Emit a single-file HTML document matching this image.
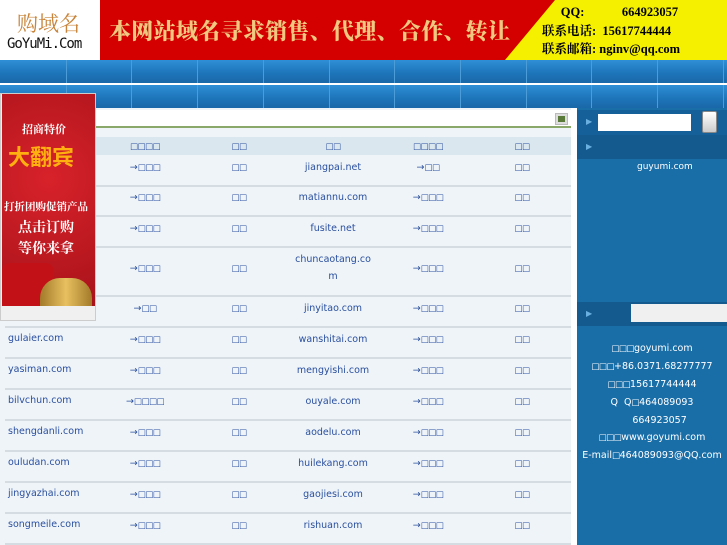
<!DOCTYPE html>
<html><head><meta charset="utf-8"><style>
*{margin:0;padding:0;box-sizing:border-box}
body{width:727px;height:545px;overflow:hidden;position:relative;background:#eef4f7;font-family:"DejaVu Sans","Liberation Sans",sans-serif;font-size:9.5px;color:#2a4fa0}
.a{position:absolute}
.nav{position:absolute;left:0;width:727px;background:linear-gradient(#2f8fd6,#1d74b8 60%,#1a68a8)}
.sep{position:absolute;top:0;bottom:0;width:1px;background:#4c9cd8}
.t{position:absolute;white-space:nowrap;transform:translateX(-50%)}
.hl{position:absolute;left:5px;width:566px;height:2px;background:#d6dde2}
.b{font-size:8.5px;letter-spacing:-0.5px}
#ad{z-index:5}
</style></head><body>
<div class="a" style="left:0;top:0;width:100px;height:60px;background:#fff"></div>
<div class="a" style="left:17px;top:8px;font:21px 'Noto Serif CJK SC',serif;color:#c8843a">购域名</div>
<div class="a" style="left:7px;top:36px;font:14px 'DejaVu Sans Mono',monospace;color:#111;letter-spacing:-1px">GoYuMi.Com</div>
<div class="a" style="left:100px;top:0;width:627px;height:60px;background:#d40000"></div>
<div class="a" style="left:505px;top:0;width:222px;height:60px;background:#f5f000;clip-path:polygon(50px 0,100% 0,100% 100%,0 100%)"></div>
<div class="a" style="left:109px;top:15px;font:900 22px 'Noto Serif CJK SC',serif;color:#f0c880;letter-spacing:0.3px">本网站域名寻求销售、代理、合作、转让</div>
<div class="a" style="left:542px;top:3px;font:bold 12.5px 'Liberation Serif','Noto Serif CJK SC',serif;color:#000;line-height:18.5px;white-space:pre">      QQ:            664923057
联系电话:  15617744444
联系邮箱: nginv@qq.com</div>
<div class="nav" style="top:60px;height:23px"></div>
<div class="a" style="left:0;top:83px;width:727px;height:2px;background:#fff"></div>
<div class="nav" style="top:85px;height:23px"></div>
<div id="seps"></div>
<div class="a" style="left:0;top:108px;width:577px;height:437px;background:#eef4f7"></div>
<div class="a" style="left:95px;top:110px;width:476px;height:18px;background:#fff;border-bottom:2px solid #8aa86a"></div>
<div class="a" style="left:555px;top:113px;width:13px;height:12px;background:#ddd;border:1px solid #bbb"><div style="margin:2px;width:7px;height:6px;background:#5a7a3a"></div></div>
<div class="a" style="left:5px;top:137px;width:566px;height:18px;background:#dbe7ee"></div>
<div class="a" style="left:571px;top:108px;width:6px;height:437px;background:#fff"></div>
<div class="a" style="left:577px;top:108px;width:150px;height:437px;background:#1a6ea8"></div>
<div class="a" style="left:577px;top:110px;width:150px;height:25px;background:#16609a"></div>
<div class="a" style="left:598px;top:114px;width:93px;height:17px;background:#fff"></div>
<div class="a" style="left:702px;top:111px;width:15px;height:22px;background:linear-gradient(#fff,#ccc);border:1px solid #888;border-radius:2px"></div>
<div class="a" style="left:577px;top:135px;width:150px;height:24px;background:#155a8e"></div>
<div class="a" style="left:577px;top:302px;width:150px;height:24px;background:#155a8e"></div>
<div class="a" style="left:631px;top:304px;width:96px;height:18px;background:#f0f0f0"></div>
<div class="a" style="left:586px;top:117px;color:#6ab0e0;font-size:8px">▶</div>
<div class="a" style="left:586px;top:142px;color:#6ab0e0;font-size:8px">▶</div>
<div class="a" style="left:586px;top:309px;color:#6ab0e0;font-size:8px">▶</div>
<div class="a" style="left:637px;top:162px;color:#fff;font-size:9px">guyumi.com</div>
<div class="a" style="left:577px;top:340px;width:150px;text-align:center;color:#fff;line-height:17px;font-size:9.5px"><span class="b">□□□</span>goyumi.com<br><span class="b">□□□</span>+86.0371.68277777<br><span class="b">□□□</span>15617744444<br>Q&nbsp; Q<span class="b">□</span>464089093<br>&nbsp;&nbsp;&nbsp;&nbsp;&nbsp;664923057<br><span class="b">□□□</span>www.goyumi.com<br>E-mail<span class="b">□</span>464089093@QQ.com</div>
<div id="ad" class="a" style="left:0;top:93px;width:96px;height:228px;background:#f0f0f0;border:1px solid #ccc;overflow:hidden">
<div class="a" style="left:1px;top:0;width:93px;height:212px;background:radial-gradient(circle at 50% 40%,#d8222a,#a8121a)"></div>
<div class="a" style="left:21px;top:27px;color:#fff;font:bold 11px 'Noto Serif CJK SC',serif">招商特价</div>
<div class="a" style="left:7px;top:46px;color:#ffb010;font:bold 22px 'Noto Sans CJK SC',sans-serif">大翻宾</div>
<div class="a" style="left:3px;top:105px;color:#fff;font:bold 10.5px 'Noto Serif CJK SC',serif">打折团购促销产品</div>
<div class="a" style="left:17px;top:123px;color:#fff;font:bold 14px 'Noto Serif CJK SC',serif">点击订购</div>
<div class="a" style="left:17px;top:144px;color:#fff;font:bold 14px 'Noto Serif CJK SC',serif">等你来拿</div>
<div class="a" style="left:1px;top:169px;width:52px;height:43px;background:#c21218;border-radius:8px 8px 0 0"></div>
<div class="a" style="left:39px;top:184px;width:52px;height:28px;background:linear-gradient(90deg,#a27a2a,#e8c060,#a27a2a);border-radius:20px 20px 0 0"></div>
</div>
<div id="tbl"></div>
<script>
var s='';for(var i=1;i<12;i++){var x=Math.round(i*65.7);s+='<div class="sep" style="left:'+x+'px;top:60px;height:23px"></div><div class="sep" style="left:'+x+'px;top:85px;height:23px"></div>';}
document.getElementById('seps').innerHTML=s;
function B(t){return t.replace(/(□+)/g,'<span class="b">$1</span>');}
var h='';var cx=[145,239,333,428,522];
['□□□□','□□','□□','□□□□','□□'].forEach(function(t,i){h+='<div class="t" style="left:'+cx[i]+'px;top:141px">'+B(t)+'</div>'});
var rows=[[155,'','→□□□','jiangpai.net','→□□'],[185,'','→□□□','matiannu.com','→□□□'],[216,'','→□□□','fusite.net','→□□□'],[247,'','→□□□','chuncaotang.co<br>m','→□□□',49],[296,'','→□□','jinyitao.com','→□□□'],[327,'gulaier.com','→□□□','wanshitai.com','→□□□'],[358,'yasiman.com','→□□□','mengyishi.com','→□□□'],[389,'bilvchun.com','→□□□□','ouyale.com','→□□□'],[420,'shengdanli.com','→□□□','aodelu.com','→□□□'],[451,'ouludan.com','→□□□','huilekang.com','→□□□'],[482,'jingyazhai.com','→□□□','gaojiesi.com','→□□□'],[513,'songmeile.com','→□□□','rishuan.com','→□□□']];
rows.forEach(function(r){var y=r[0];var tall=r[5];var my=tall?y+16:y+7;
h+='<div class="a" style="left:8px;top:'+(y+6)+'px">'+r[1]+'</div>';
h+='<div class="t" style="left:145px;top:'+my+'px">'+B(r[2])+'</div>';
h+='<div class="t" style="left:239px;top:'+my+'px">'+B('□□')+'</div>';
h+='<div class="t" style="left:333px;top:'+(y+4)+'px;text-align:center;line-height:17px">'+r[3]+'</div>';
h+='<div class="t" style="left:428px;top:'+my+'px">'+B(r[4])+'</div>';
h+='<div class="t" style="left:522px;top:'+my+'px">'+B('□□')+'</div>';
var e=y+(tall||31);h+='<div class="hl" style="top:'+(e-1)+'px"></div>';});
document.getElementById('tbl').innerHTML=h;
</script>
</body></html>
